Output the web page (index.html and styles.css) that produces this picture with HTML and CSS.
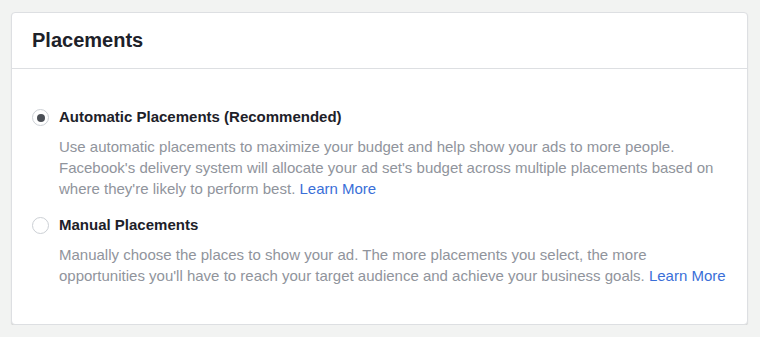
FILE: index.html
```html
<!DOCTYPE html>
<html lang="en">
<head>
  <meta charset="UTF-8" />
  <title>Placements</title>
  <link rel="stylesheet" href="styles.css">
</head>
<body>
  <div class="card">
    <div class="card-header">
      <h2>Placements</h2>
    </div>
    <div class="card-body">
      <div class="option">
        <span class="radio checked"></span>
        <div class="option-text">
          <div class="label">Automatic Placements (Recommended)</div>
          <p class="desc">Use automatic placements to maximize your budget and help show your ads to more people.<br>Facebook's delivery system will allocate your ad set's budget across multiple placements based on<br>where they're likely to perform best. <a href="#">Learn More</a></p>
        </div>
      </div>
      <div class="option">
        <span class="radio"></span>
        <div class="option-text">
          <div class="label">Manual Placements</div>
          <p class="desc">Manually choose the places to show your ad. The more placements you select, the more<br>opportunities you'll have to reach your target audience and achieve your business goals. <a href="#">Learn More</a></p>
        </div>
      </div>
    </div>
  </div>
</body>
</html>
```

FILE: styles.css
```css
body {
  margin: 0;
  padding: 12px 12px 0 11px;
  background: #f2f3f2;
  font-family: 'Liberation Sans', Arial, sans-serif;
  color: #1d2129;
}

.card {
  width: 735px;
  background: #fff;
  border: 1px solid #dddfe2;
  border-radius: 4px;
  box-shadow: 0 1px 1px rgba(0, 0, 0, 0.12);
}

.card-header {
  height: 55px;
  border-bottom: 1px solid #dddfe2;
  display: flex;
  align-items: center;
  padding-left: 20px;
}

.card-header h2 {
  margin: 0;
  font-size: 20px;
  font-weight: bold;
}

.card-body {
  padding: 39px 20px 38px 20px;
  display: flex;
  flex-direction: column;
  gap: 17px;
}

.option {
  display: flex;
  align-items: flex-start;
}

.radio {
  width: 15px;
  height: 15px;
  border: 1px solid #ccd0d5;
  border-radius: 50%;
  margin: 1px 10px 0 0;
  flex-shrink: 0;
  display: flex;
  align-items: center;
  justify-content: center;
}

.radio.checked::after {
  content: '';
  width: 8px;
  height: 8px;
  border-radius: 50%;
  background: #4b4f56;
}

.label {
  font-size: 15px;
  font-weight: bold;
  line-height: 18px;
}

.desc {
  margin: 10px 0 0;
  font-size: 15px;
  line-height: 21px;
  color: #90949c;
}

.desc a {
  color: #3a6fd8;
  text-decoration: none;
}
```
